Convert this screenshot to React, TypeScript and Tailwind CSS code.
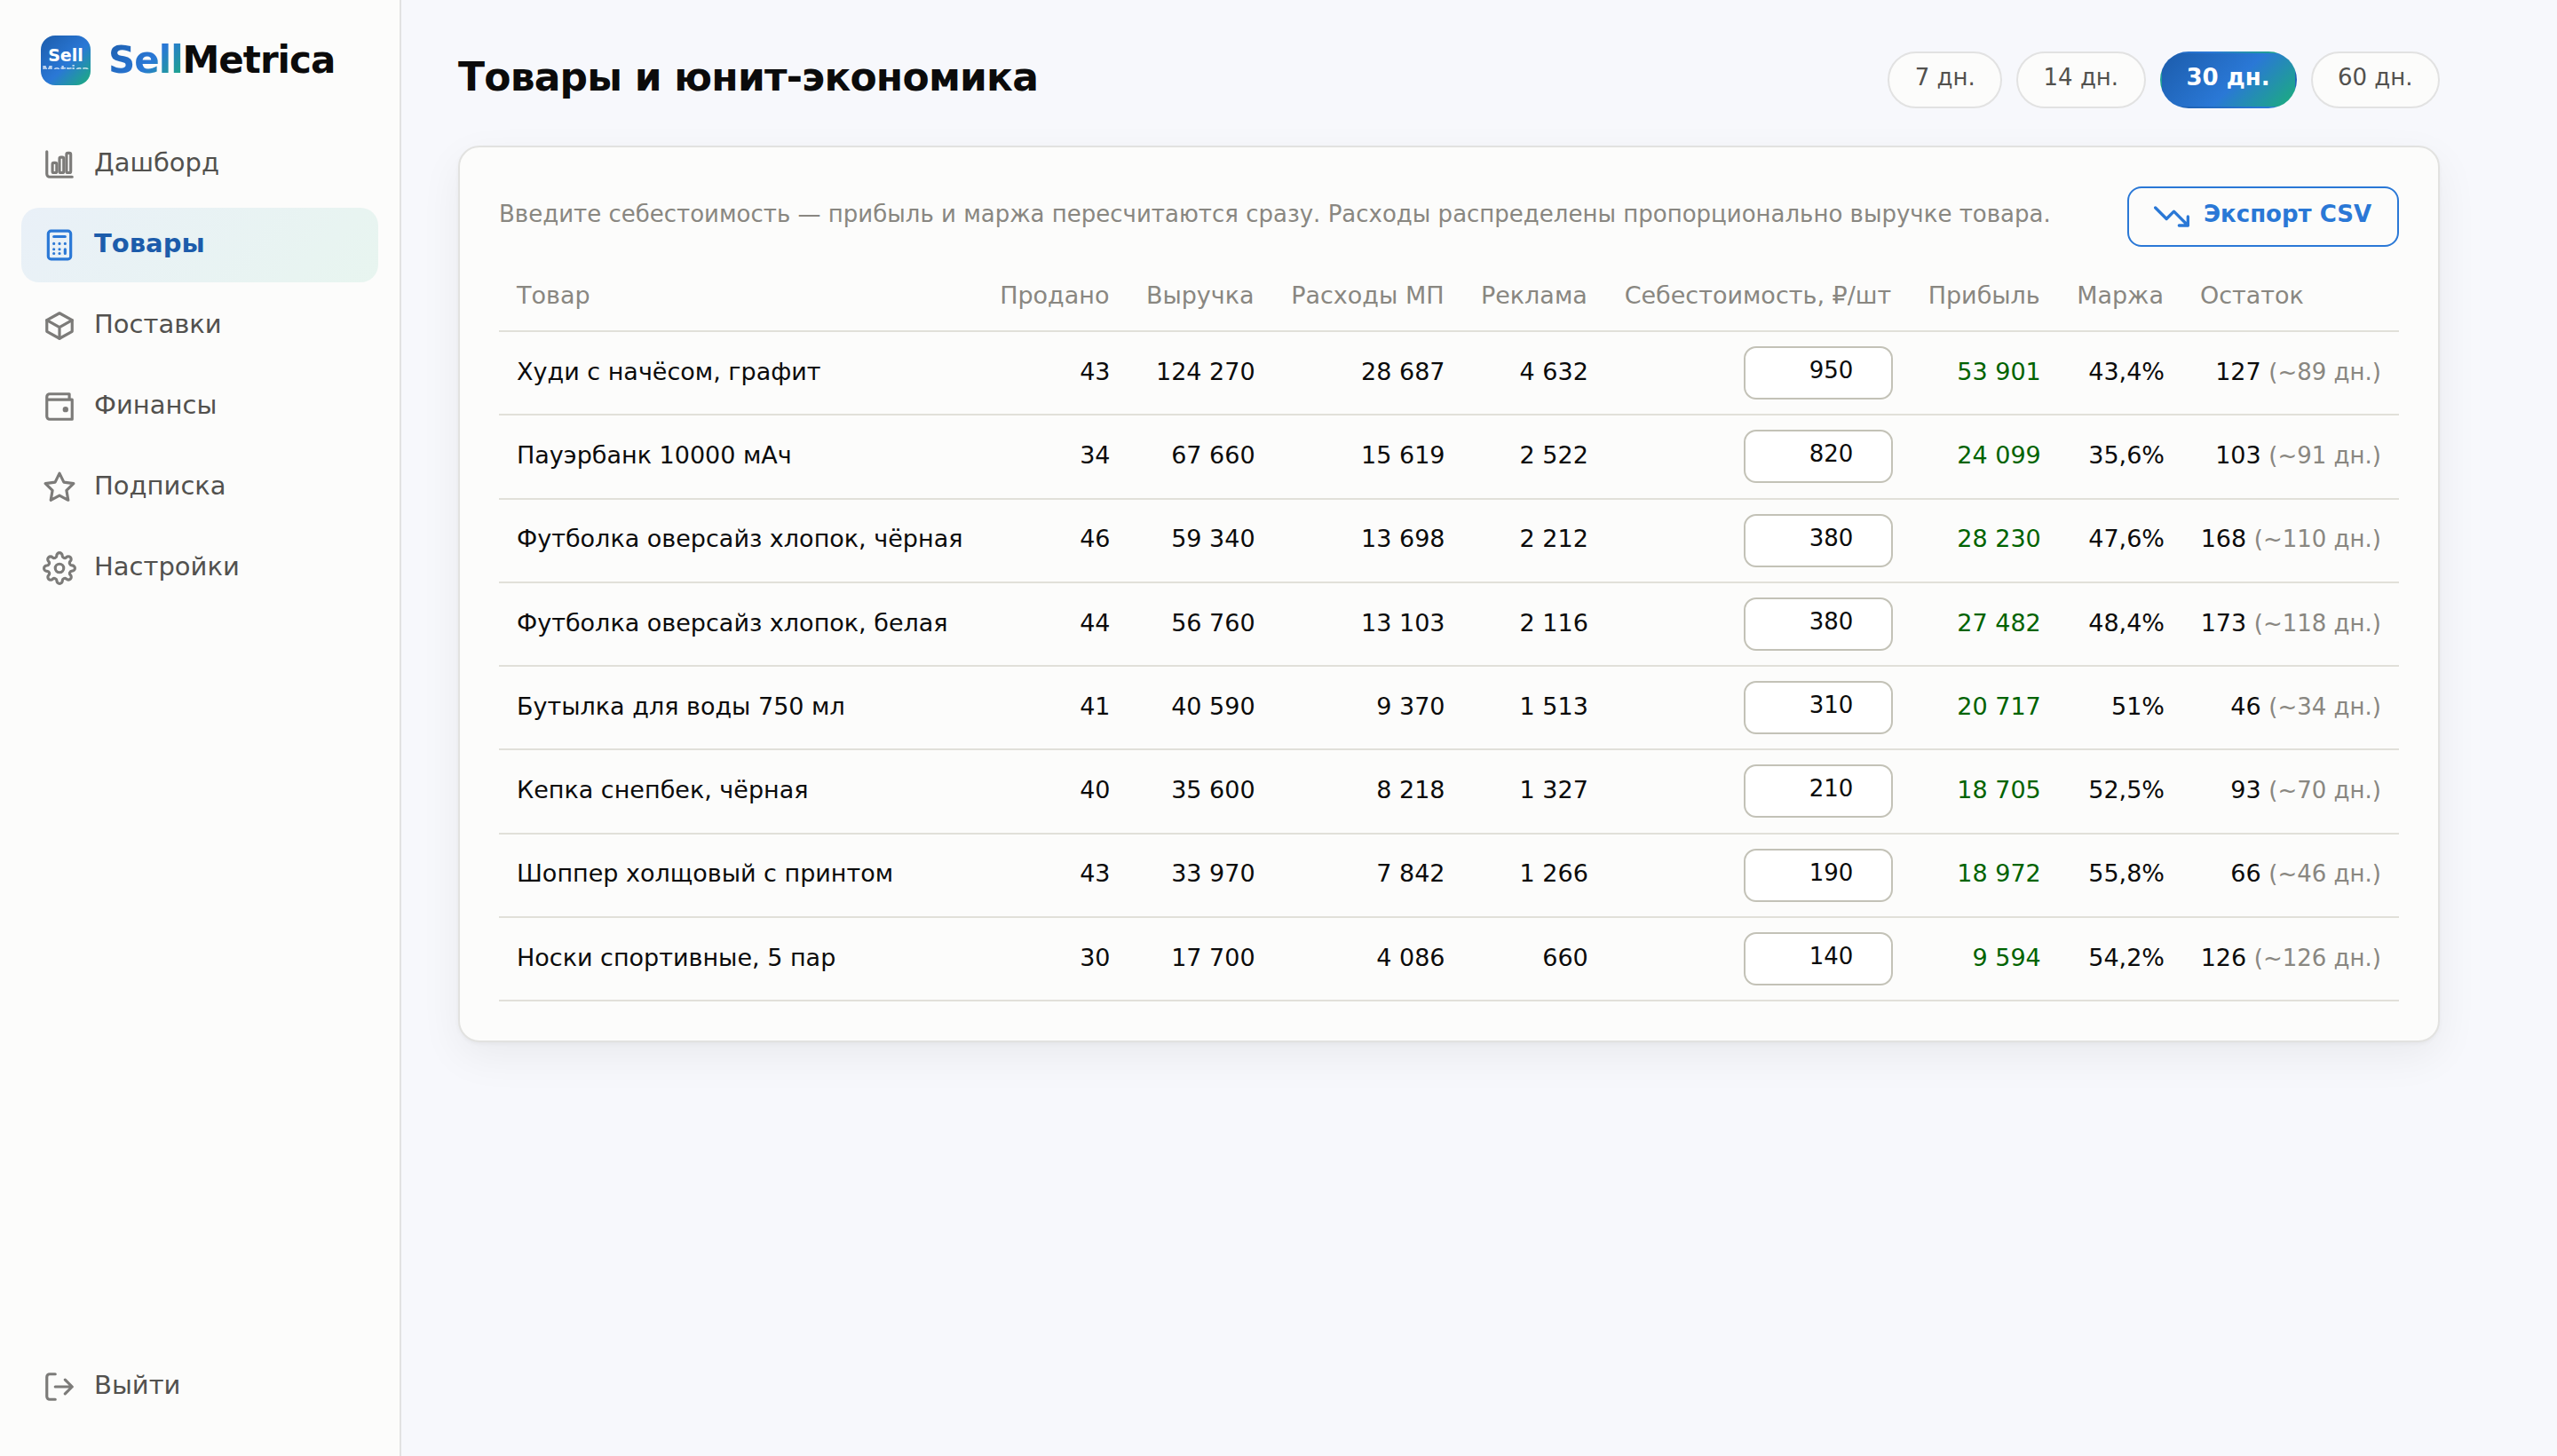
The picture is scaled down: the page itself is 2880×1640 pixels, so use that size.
import type { ReactNode } from "react"

interface Product {
  name: string
  sold: number
  revenue: string
  fees: string
  ads: string
  cost: number
  profit: string
  margin: string
  stock: number
  days: number
}

const PRODUCTS: Product[] = [
  { name: "Худи с начёсом, графит", sold: 43, revenue: "124 270", fees: "28 687", ads: "4 632", cost: 950, profit: "53 901", margin: "43,4%", stock: 127, days: 89 },
  { name: "Пауэрбанк 10000 мАч", sold: 34, revenue: "67 660", fees: "15 619", ads: "2 522", cost: 820, profit: "24 099", margin: "35,6%", stock: 103, days: 91 },
  { name: "Футболка оверсайз хлопок, чёрная", sold: 46, revenue: "59 340", fees: "13 698", ads: "2 212", cost: 380, profit: "28 230", margin: "47,6%", stock: 168, days: 110 },
  { name: "Футболка оверсайз хлопок, белая", sold: 44, revenue: "56 760", fees: "13 103", ads: "2 116", cost: 380, profit: "27 482", margin: "48,4%", stock: 173, days: 118 },
  { name: "Бутылка для воды 750 мл", sold: 41, revenue: "40 590", fees: "9 370", ads: "1 513", cost: 310, profit: "20 717", margin: "51%", stock: 46, days: 34 },
  { name: "Кепка снепбек, чёрная", sold: 40, revenue: "35 600", fees: "8 218", ads: "1 327", cost: 210, profit: "18 705", margin: "52,5%", stock: 93, days: 70 },
  { name: "Шоппер холщовый с принтом", sold: 43, revenue: "33 970", fees: "7 842", ads: "1 266", cost: 190, profit: "18 972", margin: "55,8%", stock: 66, days: 46 },
  { name: "Носки спортивные, 5 пар", sold: 30, revenue: "17 700", fees: "4 086", ads: "660", cost: 140, profit: "9 594", margin: "54,2%", stock: 126, days: 126 },
]

const PERIODS = [7, 14, 30, 60]
const ACTIVE_PERIOD = 30

function Icon({ children, className = "size-[38px]" }: { children: ReactNode; className?: string }) {
  return (
    <svg
      viewBox="0 0 24 24"
      fill="none"
      stroke="currentColor"
      strokeWidth="2"
      strokeLinecap="round"
      strokeLinejoin="round"
      className={`shrink-0 ${className}`}
    >
      {children}
    </svg>
  )
}

const icons = {
  dashboard: (
    <Icon>
      <path d="M3 3v16a2 2 0 0 0 2 2h16" />
      <rect x="7" y="11" width="3" height="7" rx="1" />
      <rect x="12" y="7" width="3" height="11" rx="1" />
      <rect x="17" y="4" width="3" height="14" rx="1" />
    </Icon>
  ),
  products: (
    <Icon>
      <rect x="4" y="2" width="16" height="20" rx="2" />
      <path d="M8 6h8M8 11h.01M12 11h.01M16 11h.01M8 15h.01M12 15h.01M16 15v3M8 18h.01M12 18h.01" />
    </Icon>
  ),
  supplies: (
    <Icon>
      <path d="m12 3 9 5v8l-9 5-9-5V8z" />
      <path d="m3 8 9 5 9-5M12 13v8" />
    </Icon>
  ),
  finance: (
    <Icon>
      <path d="M19 7V3H5a2 2 0 0 0-2 2v14a2 2 0 0 0 2 2h16V7H3" />
      <circle cx="16.3" cy="14" r="1" fill="currentColor" />
    </Icon>
  ),
  subscription: (
    <Icon>
      <path d="m12 2 3.09 6.26L22 9.27l-5 4.87 1.18 6.88L12 17.77l-6.18 3.25L7 14.14 2 9.27l6.91-1.01z" />
    </Icon>
  ),
  settings: (
    <Icon>
      <circle cx="12" cy="12" r="3" />
      <path d="M19.4 15a1.65 1.65 0 0 0 .33 1.82l.06.06a2 2 0 0 1 0 2.83 2 2 0 0 1-2.83 0l-.06-.06a1.65 1.65 0 0 0-1.82-.33 1.65 1.65 0 0 0-1 1.51V21a2 2 0 0 1-2 2 2 2 0 0 1-2-2v-.09A1.65 1.65 0 0 0 9 19.4a1.65 1.65 0 0 0-1.82.33l-.06.06a2 2 0 0 1-2.83 0 2 2 0 0 1 0-2.83l.06-.06a1.65 1.65 0 0 0 .33-1.82 1.65 1.65 0 0 0-1.51-1H3a2 2 0 0 1-2-2 2 2 0 0 1 2-2h.09A1.65 1.65 0 0 0 4.6 9a1.65 1.65 0 0 0-.33-1.82l-.06-.06a2 2 0 0 1 0-2.83 2 2 0 0 1 2.83 0l.06.06a1.65 1.65 0 0 0 1.82.33H9a1.65 1.65 0 0 0 1-1.51V3a2 2 0 0 1 2-2 2 2 0 0 1 2 2v.09a1.65 1.65 0 0 0 1 1.51 1.65 1.65 0 0 0 1.82-.33l.06-.06a2 2 0 0 1 2.83 0 2 2 0 0 1 0 2.83l-.06.06a1.65 1.65 0 0 0-.33 1.82V9a1.65 1.65 0 0 0 1.51 1H21a2 2 0 0 1 2 2 2 2 0 0 1-2 2h-.09a1.65 1.65 0 0 0-1.51 1z" />
    </Icon>
  ),
  logout: (
    <Icon>
      <path d="M9 3H5a2 2 0 0 0-2 2v14a2 2 0 0 0 2 2h4M16 17l5-5-5-5M21 12H9" />
    </Icon>
  ),
}

const NAV: { label: string; icon: ReactNode; active?: boolean }[] = [
  { label: "Дашборд", icon: icons.dashboard },
  { label: "Товары", icon: icons.products, active: true },
  { label: "Поставки", icon: icons.supplies },
  { label: "Финансы", icon: icons.finance },
  { label: "Подписка", icon: icons.subscription },
  { label: "Настройки", icon: icons.settings },
]

function NavItem({ label, icon, active }: { label: string; icon: ReactNode; active?: boolean }) {
  return (
    <a
      className={
        active
          ? "flex h-[84px] items-center gap-5 rounded-[20px] bg-[linear-gradient(135deg,rgba(42,120,214,0.09),rgba(27,175,122,0.09))] px-6 font-bold text-[#1c5cab]"
          : "flex h-[84px] items-center gap-5 rounded-[20px] px-6 text-[#52514e]"
      }
    >
      <span className={active ? "text-[#2a78d6]" : "opacity-75"}>{icon}</span>
      <span className="pb-[2.6px]">{label}</span>
    </a>
  )
}

function Sidebar() {
  return (
    <aside className="flex w-[452px] shrink-0 flex-col border-r-2 border-[#e2e2e2] bg-[#fcfcfb] px-6 pt-10 pb-9 text-[29px]">
      <div className="flex h-14 items-center gap-5 pl-[22px]">
        <div className="flex size-14 flex-col items-center rounded-2xl bg-[linear-gradient(135deg,#1c5cab,#2a78d6_55%,#1baf7a)] pt-3 font-bold text-white">
          <span className="text-[19px] leading-[20px]">Sell</span>
          <span className="h-[6px] overflow-hidden text-[12.6px] leading-[13px] opacity-70">Metrica</span>
        </div>
        <div className="pb-px text-[42px] font-bold tracking-[-1px]">
          <span className="bg-[linear-gradient(135deg,#1c5cab,#2a78d6_55%,#1baf7a)] bg-clip-text text-transparent">Sell</span>
          Metrica
        </div>
      </div>
      <nav className="mt-[47px] flex flex-1 flex-col gap-[7.1px]">
        {NAV.map((item) => (
          <NavItem key={item.label} {...item} />
        ))}
      </nav>
      <NavItem label="Выйти" icon={icons.logout} />
    </aside>
  )
}

function PeriodTabs() {
  return (
    <div className="flex gap-4 text-[26px]">
      {PERIODS.map((p) => (
        <button
          key={p}
          className={
            p === ACTIVE_PERIOD
              ? "h-16 rounded-full border-2 border-transparent bg-[linear-gradient(135deg,#1c5cab,#2a78d6_55%,#1baf7a)] px-7 pb-1.5 font-bold text-white"
              : "h-16 rounded-full border-2 border-[#e2e2e2] bg-[#fcfcfb] px-[28.4px] pb-1.5 text-[#52514e]"
          }
        >
          {p} дн.
        </button>
      ))}
    </div>
  )
}

function ProductTable() {
  return (
    <table className="w-full border-collapse text-right text-[27px] whitespace-nowrap [&_td]:px-5 [&_td]:pb-0.5 [&_th]:pr-[21px] [&_th]:pl-5">
      <thead>
        <tr className="h-[95px] border-b-2 border-[#e1e0d9] text-[#898781] [&_th]:pt-4 [&_th]:font-normal">
          <th className="text-left">Товар</th>
          <th>Продано</th>
          <th>Выручка</th>
          <th>Расходы МП</th>
          <th>Реклама</th>
          <th>Себестоимость, ₽/шт</th>
          <th>Прибыль</th>
          <th>Маржа</th>
          <th className="text-left">Остаток</th>
        </tr>
      </thead>
      <tbody>
        {PRODUCTS.map((p) => (
          <tr key={p.name} className="h-[94.25px] border-b-2 border-[#e1e0d9] tabular-nums">
            <td className="text-left">{p.name}</td>
            <td>{p.sold}</td>
            <td>{p.revenue}</td>
            <td>{p.fees}</td>
            <td>{p.ads}</td>
            <td>
              <input
                defaultValue={p.cost}
                className="mt-0.5 -mr-px ml-auto block h-[60px] w-[168px] rounded-[14px] border-2 border-[#c3c2b7] bg-white pr-[43px] pb-1.5 text-right text-[26px]"
              />
            </td>
            <td className="text-[#006300]">{p.profit}</td>
            <td>{p.margin}</td>
            <td>
              {p.stock} <span className="text-[26px] text-[#898781]">(~{p.days} дн.)</span>
            </td>
          </tr>
        ))}
      </tbody>
    </table>
  )
}

export default function App() {
  return (
    <div className="flex h-[1640px] w-[2880px] bg-[#f7f8fc] font-['DejaVu_Sans',sans-serif] text-[#0b0b0b]">
      <Sidebar />
      <main className="min-w-0 flex-1 pt-[58px] pr-[132px] pl-16">
        <header className="flex h-16 items-center justify-between">
          <h1 className="pb-1.5 text-[44px] font-bold tracking-[-0.8px]">Товары и юнит-экономика</h1>
          <PeriodTabs />
        </header>
        <section className="mt-[42px] rounded-3xl border-2 border-[#e2e2e0] bg-[#fcfcfb] p-11 shadow-[0_2px_4px_rgba(11,11,11,0.04),0_16px_48px_rgba(11,11,11,0.06)]">
          <div className="flex h-[68px] items-center justify-between">
            <p className="pb-1.5 text-[26px] text-[#898781]">
              Введите себестоимость — прибыль и маржа пересчитаются сразу. Расходы распределены пропорционально выручке товара.
            </p>
            <button className="flex h-[68px] w-[306px] items-center gap-4 rounded-2xl border-2 border-[#2a78d6] px-7 text-[26px] font-bold whitespace-nowrap text-[#2a78d6]">
              <Icon className="size-10">
                <path d="m1 6 7.5 7.5 5-5L23 18M17 18h6v-6" />
              </Icon>
              <span className="pb-1.5">Экспорт CSV</span>
            </button>
          </div>
          <ProductTable />
        </section>
      </main>
    </div>
  )
}
